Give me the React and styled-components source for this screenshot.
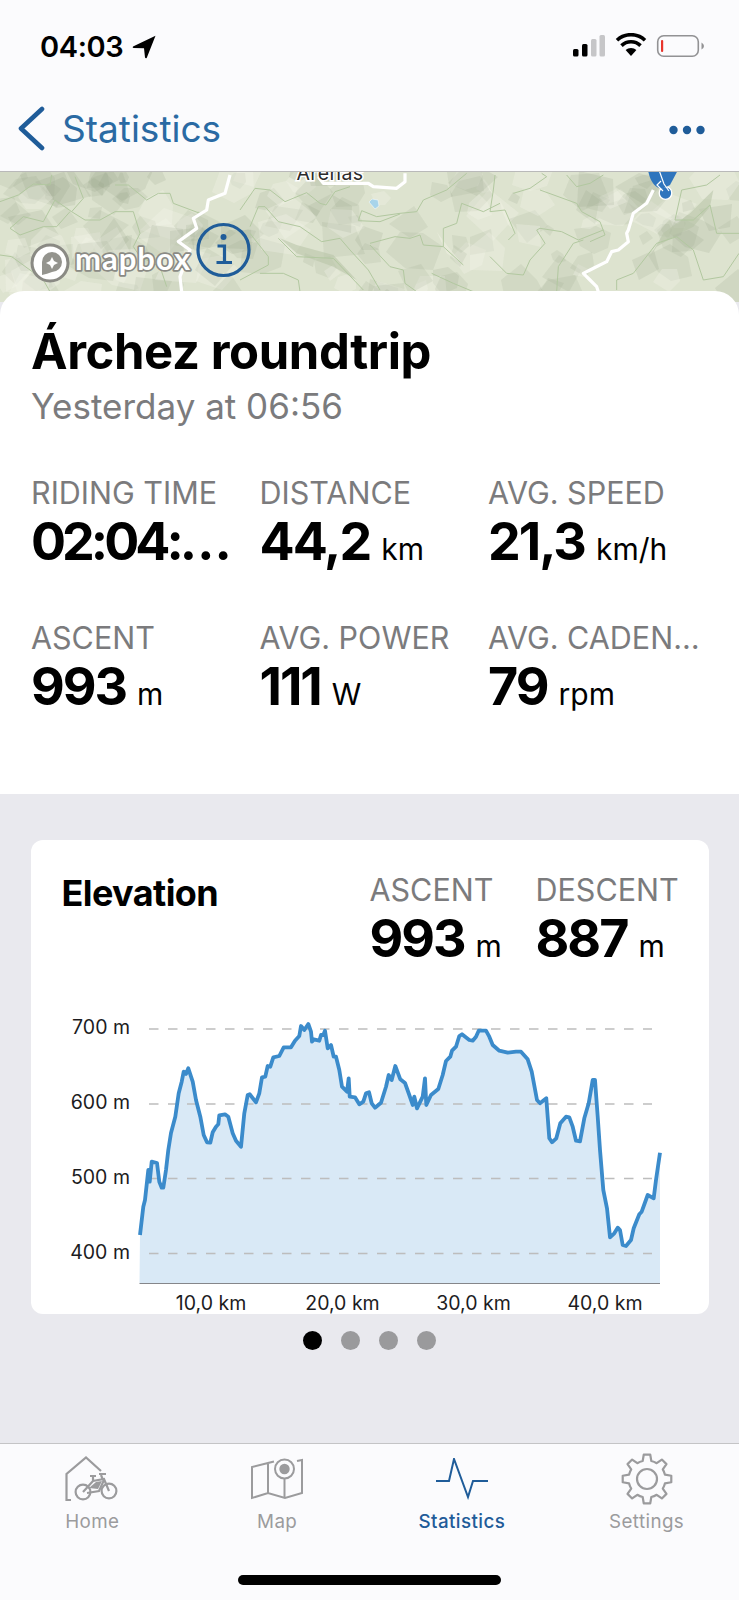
import styled, { createGlobalStyle } from 'styled-components';

const GlobalStyle = createGlobalStyle`
  html, body {
    margin: 0;
    padding: 0;
    background: #fff;
  }
  * {
    box-sizing: border-box;
  }
`;

const BLUE = '#1f5c99';
const GREY_ICON = '#9b9b9d';

const Page = styled.div`
  width: 739px;
  height: 1600px;
  display: flex;
  flex-direction: column;
  overflow: hidden;
  font-family: Inter, 'Liberation Sans', sans-serif;
  background: #e9e9ee;
`;

const TopBars = styled.header`
  height: 172px;
  background: #fbfbfd;
  border-bottom: 1px solid #b9b9b9;
  position: relative;
  z-index: 2;
`;

const StatusBar = styled.div`
  height: 94px;
  padding: 33px 35px 0 40px;
  display: flex;
  justify-content: space-between;
  align-items: flex-start;
`;

const Clock = styled.div`
  display: flex;
  align-items: center;
  gap: 9px;
  font-size: 29px;
  line-height: 28px;
  font-weight: 600;
  letter-spacing: -0.4px;
  color: #000;
`;

const StatusIcons = styled.div`
  display: flex;
  align-items: center;
`;

const NavBar = styled.nav`
  height: 68px;
  padding: 0 34px 0 18px;
  display: flex;
  align-items: center;
  justify-content: space-between;
`;

const BackLink = styled.div`
  display: flex;
  align-items: center;
  gap: 17px;
  font-size: 37px;
  color: #2a6aa3;
`;

const MoreButton = styled.div`
  display: flex;
  margin-top: 4px;
`;

const MapPane = styled.div`
  height: 130px;
  flex: none;
  background: #dfe5d2;
  overflow: hidden;
  svg {
    display: block;
  }
`;

const Sheet = styled.section`
  height: 503px;
  flex: none;
  margin-top: -11px;
  position: relative;
  padding: 33px 31px 0;
  background: #fff;
  border-radius: 24px 24px 0 0;
`;

const Title = styled.h1`
  margin: 0;
  font-size: 49px;
  line-height: 56px;
  font-weight: 700;
  color: #000;
  letter-spacing: -0.4px;
`;

const Subtitle = styled.div`
  margin-top: 4px;
  font-size: 35px;
  line-height: 44px;
  color: #7b7b7d;
`;

const StatGrid = styled.div`
  margin-top: 47px;
  display: grid;
  grid-template-columns: repeat(3, 228.5px);
  row-gap: 41px;
`;

const StatLabel = styled.div`
  font-size: 30.5px;
  line-height: 36px;
  color: #7b7b7d;
  white-space: nowrap;
`;

const StatValue = styled.div`
  margin-top: 1px;
  font-size: 52px;
  line-height: 60px;
  font-weight: 700;
  letter-spacing: ${(props) => (props.$tight ? '-4px' : '-2px')};
  color: #000;
  white-space: nowrap;
`;

const Unit = styled.span`
  margin-left: 11px;
  font-size: 30px;
  font-weight: 400;
  letter-spacing: 0;
`;

const Content = styled.main`
  flex: 1;
  padding: 46px 30px 0;
  display: flex;
  flex-direction: column;
  align-items: center;
`;

const ChartCard = styled.article`
  width: 678px;
  height: 474px;
  flex: none;
  background: #fff;
  border-radius: 12px;
  display: flex;
  flex-direction: column;
  svg {
    display: block;
  }
`;

const ChartHeader = styled.div`
  height: 150px;
  flex: none;
  padding: 32px 20px 0 31px;
  display: flex;
  justify-content: space-between;
`;

const ChartTitle = styled.h2`
  margin: 0;
  font-size: 36px;
  line-height: 42px;
  font-weight: 700;
  color: #000;
  letter-spacing: -0.6px;
`;

const HeaderStats = styled.div`
  display: grid;
  grid-template-columns: 166px 153px;
`;

const Dots = styled.div`
  margin-top: 17px;
  display: flex;
  gap: 18.8px;
`;

const Dot = styled.span`
  width: 19px;
  height: 19px;
  border-radius: 50%;
  background: ${(props) => (props.$active ? '#000' : '#9a9a9c')};
`;

const TabBar = styled.footer`
  height: 157px;
  flex: none;
  padding-top: 10px;
  background: #fbfbfd;
  border-top: 1px solid #c4c4c6;
  position: relative;
  display: grid;
  grid-template-columns: repeat(4, 1fr);
  align-items: start;
`;

const Tab = styled.div`
  display: flex;
  flex-direction: column;
  align-items: center;
  color: ${(props) => (props.$active ? BLUE : GREY_ICON)};
  font-size: 18.8px;
  line-height: 24px;
  font-weight: ${(props) => (props.$active ? 500 : 400)};
  letter-spacing: 0.4px;
`;

const TabIcon = styled.div`
  height: 50px;
  margin-bottom: 6px;
  display: flex;
  align-items: center;
  justify-content: center;
`;

const HomeIndicator = styled.div`
  position: absolute;
  left: 238px;
  top: 131px;
  width: 263px;
  height: 10px;
  border-radius: 5px;
  background: #000;
`;

// elevation profile, traced off the screenshot in page coordinates
const ELEVATION = [
  [139, 1235], [142.3, 1206.7], [144, 1200], [147.3, 1170], [148.7, 1181.7], [150.7, 1161.7], [156, 1163],
  [158.3, 1181.7], [160.7, 1187.7], [162.3, 1187.7], [165, 1170], [167.3, 1150], [170, 1133], [174.3, 1116.7],
  [177.7, 1093.3], [180.7, 1081.7], [182.7, 1071.7], [185, 1074], [187.3, 1068.3], [191.7, 1081.7], [195, 1100],
  [199.3, 1116.7], [202.7, 1135], [206, 1142.3], [209.3, 1142.7], [211.7, 1132.3], [215, 1126.7], [217.3, 1124.3],
  [218.3, 1115.3], [224, 1114.3], [227.3, 1116.7], [231.7, 1133.3], [235, 1140.7], [240, 1146.7], [243.3, 1113.3],
  [246.7, 1095], [248.7, 1094.3], [255, 1102.3], [258.3, 1093.3], [261, 1077.3], [264.3, 1076.7], [266.7, 1066],
  [269.3, 1066.7], [272.3, 1057.3], [278.3, 1056], [282.7, 1047.3], [290, 1047.3], [294, 1040.7], [298.3, 1036],
  [300, 1026], [303.3, 1030], [307.3, 1024], [310, 1031.7], [311, 1041.7], [312.7, 1039.3], [318.3, 1040.7],
  [320, 1035], [322.3, 1035], [324, 1030.7], [326.7, 1048.3], [330, 1045], [332.7, 1056.7], [335, 1056.7],
  [338.3, 1070], [341, 1086.7], [346, 1091.7], [347.7, 1078.3], [348.7, 1096.7], [354, 1097.3], [358.3, 1104.3],
  [362.3, 1101.7], [365, 1093.3], [368, 1092.3], [370.7, 1103.3], [374, 1107.7], [380, 1102.7], [385, 1086.7],
  [387.7, 1075], [390.7, 1080], [394.3, 1066], [399.3, 1079.3], [404, 1083], [408.3, 1095], [411.7, 1105],
  [413.3, 1096.7], [416, 1108.3], [421.7, 1096.7], [424, 1078.3], [425.3, 1105], [430, 1095], [437.3, 1089],
  [441.7, 1075], [445, 1061], [449.3, 1056.7], [451, 1050.7], [455, 1046.7], [458.3, 1036], [461, 1034.3],
  [468.3, 1040], [471.7, 1040.7], [475, 1036.7], [477.7, 1030.7], [485, 1030.7], [488.3, 1036.7], [491.7, 1045],
  [498.3, 1050.7], [506.7, 1052.7], [515, 1051.7], [520, 1051.7], [526.7, 1059.3], [530.7, 1071.7], [536, 1100],
  [539, 1103.3], [545.3, 1098.3], [548.3, 1138.3], [551, 1142.3], [555.3, 1138.3], [559.3, 1123.3], [565, 1116.7],
  [568.3, 1117.3], [571.7, 1126.7], [575, 1140.7], [579, 1141.3], [583.3, 1118.3], [587.7, 1103.3], [591.7, 1080],
  [594, 1080], [596.7, 1116.7], [599, 1150], [602.3, 1190], [606, 1208.3], [609, 1237.3], [613.3, 1233.3],
  [616.7, 1227.7], [619, 1230], [621.7, 1245], [625, 1246], [630, 1240], [632.7, 1228.3], [638.3, 1214.3],
  [640.7, 1211.7], [646.7, 1195], [652.7, 1198.3], [655, 1180], [659, 1152.7],
];

const GRID = [
  { label: '700 m', y: 1029 },
  { label: '600 m', y: 1104 },
  { label: '500 m', y: 1178.5 },
  { label: '400 m', y: 1253.5 },
];

const X_TICKS = [
  { label: '10,0 km', x: 210 },
  { label: '20,0 km', x: 341.5 },
  { label: '30,0 km', x: 472.5 },
  { label: '40,0 km', x: 604 },
];

function ElevationChart() {
  const line = ELEVATION.map((p) => p.join(',')).join(' ');
  return (
    <svg width="678" height="324" viewBox="30 990 678 324" fontFamily="Inter, 'Liberation Sans', sans-serif">
      <polygon points={`138.5,1283 ${line} 659,1283`} fill="#d9e9f6" />
      {GRID.map((g) => (
        <g key={g.label}>
          <line x1="148" x2="651" y1={g.y} y2={g.y} stroke="#bdbdbd" strokeWidth="1.3" strokeDasharray="9.5 9.5" />
          <text x="129" y={g.y + 5} textAnchor="end" fontSize="19.5" fill="#1c1c1e">
            {g.label}
          </text>
        </g>
      ))}
      <polyline points={line} fill="none" stroke="#3b8bcb" strokeWidth="3.8" strokeLinejoin="round" />
      <line x1="138.5" x2="659" y1="1283.5" y2="1283.5" stroke="#85868a" strokeWidth="1.2" />
      {X_TICKS.map((t) => (
        <text key={t.label} x={t.x} y="1310" textAnchor="middle" fontSize="19.5" fill="#1c1c1e">
          {t.label}
        </text>
      ))}
    </svg>
  );
}

const pts = (list) => list.map((p) => p.join(',')).join(' ');
const zoomed = (x0, list) => list.map(([x, y]) => [x0 + x / 3, y / 3]);

const CONTOURS = [
  ...[
    [[0, 95], [55, 75], [100, 42], [150, 45], [155, 15]],
    [[30, 175], [70, 140], [130, 155], [165, 90], [215, 125], [250, 85], [225, 20]],
    [[30, 175], [60, 195], [130, 170], [170, 170], [210, 125]],
    [[215, 125], [255, 150], [300, 150], [345, 125], [400, 125], [420, 190], [400, 230], [420, 260]],
    [[345, 45], [385, 45], [440, 90], [475, 70], [510, 70], [520, 100], [600, 130]],
    [[0, 255], [35, 260], [90, 300], [130, 330], [150, 365]],
    [[420, 260], [480, 290], [500, 350]],
  ].map((c) => zoomed(0, c)),
  ...[
    [[0, 120], [45, 55], [90, 60], [135, 95], [200, 68], [240, 100], [258, 105], [285, 65], [330, 50]],
    [[30, 170], [55, 110], [75, 110], [115, 155], [180, 170], [245, 215], [300, 205], [330, 240], [385, 300], [420, 360]],
    [[30, 190], [85, 260], [85, 285], [0, 330]],
    [[115, 205], [170, 260], [280, 265], [370, 360]],
    [[60, 310], [130, 310], [175, 330], [180, 365]],
    [[355, 152], [365, 122], [410, 140], [480, 130], [530, 125], [550, 90], [620, 60], [680, 10]],
    [[355, 152], [420, 155], [480, 132]],
    [[390, 220], [465, 200], [510, 205], [540, 195], [550, 225], [610, 230], [610, 175], [650, 160], [665, 100], [730, 125], [780, 100]],
    [[390, 225], [450, 290], [490, 300], [495, 340], [530, 365]],
    [[575, 310], [640, 340], [700, 365]],
    [[610, 230], [670, 285]],
  ].map((c) => zoomed(240, c)),
  ...[
    [[15, 15], [10, 60], [0, 125], [45, 120], [75, 190], [55, 210]],
    [[70, 70], [120, 55], [170, 20], [155, 10]],
    [[150, 60], [260, 100], [275, 125], [330, 155], [345, 195], [300, 215]],
    [[140, 180], [150, 175], [215, 185], [265, 210], [340, 180]],
    [[140, 180], [165, 220], [120, 270], [100, 315], [50, 310], [0, 260]],
    [[230, 15], [260, 50], [300, 40], [340, 15]],
    [[200, 365], [205, 290], [250, 220], [280, 210]],
    [[380, 360], [380, 330], [430, 310], [500, 220], [560, 200], [610, 240], [640, 330], [700, 320], [747, 250]],
    [[555, 150], [610, 150], [660, 105], [680, 190], [747, 190]],
    [[555, 150], [575, 60], [650, 45], [690, 15]],
  ].map((c) => zoomed(490, c)),
];

const ROADS = [
  zoomed(0, [[690, 15], [675, 70], [625, 90], [620, 120], [580, 145], [590, 175], [535, 215], [570, 240], [540, 320], [545, 365]]),
  zoomed(240, [[235, 20], [250, 40], [385, 40], [400, 50], [470, 55], [495, 35], [495, 10]]),
  zoomed(490, [[490, 60], [470, 100], [430, 130], [415, 180], [410, 190], [415, 215], [385, 240], [365, 245], [350, 275], [300, 300], [280, 310], [300, 330], [320, 350], [325, 365]]),
];

const RIDGES = [
  zoomed(490, [[480, 260], [520, 190], [600, 130], [670, 60], [660, 110], [610, 170], [560, 195], [500, 230]]),
  zoomed(490, [[30, 90], [50, 130], [70, 180], [55, 165], [35, 120]]),
  zoomed(240, [[120, 205], [170, 225], [280, 255], [350, 330], [280, 290], [170, 250]]),
  zoomed(240, [[590, 185], [620, 225], [665, 280], [620, 250]]),
];

// hillshade facets, seeded so the picture stays the same on every load
function makeFacets() {
  let seed = 1337;
  const rand = () => {
    seed = (seed * 16807) % 2147483647;
    return seed / 2147483647;
  };
  const facets = [];
  for (let i = 0; i < 170; i++) {
    const cx = rand() * 739;
    const cy = rand() * 130;
    const r = 8 + rand() * 24;
    const n = 4 + Math.floor(rand() * 3);
    const start = rand() * 6.28;
    const list = [];
    for (let k = 0; k < n; k++) {
      const a = start + (k / n) * 6.28;
      const rr = r * (0.6 + rand() * 0.5);
      list.push([Math.round(cx + Math.cos(a) * rr), Math.round(cy + Math.sin(a) * rr * 0.85)]);
    }
    const tone = rand();
    let fill = 'rgba(150,163,134,0.15)';
    if (tone > 0.66) fill = 'rgba(244,246,234,0.3)';
    else if (tone > 0.5) fill = 'rgba(136,148,122,0.15)';
    facets.push({ points: pts(list), fill });
  }
  return facets;
}

const FACETS = makeFacets();

function TerrainMap() {
  return (
    <svg width="739" height="130" viewBox="0 2 739 130">
      <rect y="2" width="739" height="130" fill="#dde3cf" />
      {FACETS.map((f, i) => (
        <polygon key={i} points={f.points} fill={f.fill} />
      ))}
      {RIDGES.map((r, i) => (
        <polygon key={i} points={pts(r)} fill={i % 2 ? '#eef0e2' : '#b7c2a6'} opacity="0.55" />
      ))}
      {CONTOURS.map((c, i) => (
        <polyline key={i} points={pts(c)} fill="none" stroke="#b2c8a0" strokeWidth="1" />
      ))}
      {ROADS.map((r, i) => (
        <polyline key={i} points={pts(r)} fill="none" stroke="#fff" strokeWidth="3.2" strokeLinejoin="round" />
      ))}
      <polygon points="372,29 378,30 379,36 375,39 369,32" fill="#a8d4ea" stroke="#fff" strokeWidth="0.5" />
      <text x="330" y="9.5" textAnchor="middle" fontFamily="Inter, sans-serif" fontSize="19.5" fill="#2a2a2a" stroke="#fff"
        strokeWidth="3" paintOrder="stroke" letterSpacing="0.4">
        Arenas
      </text>
      {/* route marker */}
      <circle cx="665.5" cy="23" r="6.3" fill="#2f75bd" stroke="#fff" strokeWidth="1.3" />
      <path d="M648 0 H678 L670 15 L662 19 Q651 17 648 0Z" fill="#2f75bd" />
      <path d="M659 0 L664 14 L669 21 M661 11 L657 15 L663 21" fill="none" stroke="#fff" strokeWidth="1.2" />
      {/* mapbox logo */}
      <circle cx="50" cy="93" r="18" fill="#fff" stroke="#8a8a84" strokeWidth="3" />
      <path d="M42 105 V92 A10 10 0 1 1 52 102 Q47 104 42 105Z" fill="#94948e" />
      <path d="M52 87 L54 91 L58 93 L54 95 L52 99 L50 95 L46 93 L50 91Z" fill="#fff" />
      <text x="75" y="100" fontFamily="Lato, 'Open Sans', sans-serif" fontWeight="700" fontSize="31" letterSpacing="1" fill="#fff"
        stroke="#8a8a84" strokeWidth="3.4" paintOrder="stroke" strokeLinejoin="round">
        mapbox
      </text>
      {/* info button */}
      <circle cx="223.5" cy="80" r="25.5" fill="none" stroke={BLUE} strokeWidth="3.2" />
      <circle cx="223.5" cy="67" r="3" fill={BLUE} />
      <path d="M217.5 76 H224.5 V92 M216.5 92.5 H232" fill="none" stroke={BLUE} strokeWidth="3.2" />
    </svg>
  );
}

function LocationArrow() {
  return (
    <svg width="24" height="24" viewBox="0 0 24 24">
      <path d="M23.5 0.8 L1 11.6 Q0 12.8 1.6 13 L12 13.2 L13 22.6 Q13.8 24 14.8 22.8Z" fill="#000" />
    </svg>
  );
}

function SignalIcons() {
  return (
    <svg width="134" height="26" viewBox="570 34 134 26">
      <rect x="573" y="50" width="5.5" height="7.5" rx="1.5" fill="#000" />
      <rect x="582" y="45" width="5.5" height="12.5" rx="1.5" fill="#000" />
      <rect x="591" y="40" width="5.5" height="17.5" rx="1.5" fill="#c6c6c8" />
      <rect x="599.5" y="36" width="5.5" height="21.5" rx="1.5" fill="#c6c6c8" />
      <path d="M631 57 L625.6 51 A8 8 0 0 1 636.4 51Z" fill="#000" />
      <path d="M621.5 46.6 A13.6 13.6 0 0 1 640.5 46.6" fill="none" stroke="#000" strokeWidth="3.6" />
      <path d="M617 41.2 A20.5 20.5 0 0 1 645 41.2" fill="none" stroke="#000" strokeWidth="3.6" />
      <rect x="657.7" y="36.7" width="40.6" height="20.6" rx="6" fill="none" stroke="#929294" strokeWidth="1.6" />
      <rect x="661" y="41" width="2.2" height="12" rx="1" fill="#e8352c" />
      <path d="M701.5 43.5 Q704 45 704 47 Q704 49 701.5 50.5Z" fill="#929294" />
    </svg>
  );
}

function BackChevron() {
  return (
    <svg width="27" height="45" viewBox="0 0 27 45">
      <path d="M24 3 L3 22.5 L24 42" fill="none" stroke={BLUE} strokeWidth="4.6" strokeLinecap="round" strokeLinejoin="round" />
    </svg>
  );
}

function MoreDots() {
  return (
    <svg width="36" height="10" viewBox="0 0 36 10">
      <circle cx="4.5" cy="5" r="4.2" fill={BLUE} />
      <circle cx="18" cy="5" r="4.2" fill={BLUE} />
      <circle cx="31.5" cy="5" r="4.2" fill={BLUE} />
    </svg>
  );
}

function HomeIcon() {
  return (
    <svg width="54" height="46" viewBox="0 0 54 46" fill="none" stroke={GREY_ICON} strokeWidth="2.2">
      <path d="M6 44 H1.5 V18 L21 1.5 L36 15" />
      <circle cx="18" cy="36" r="7.4" />
      <circle cx="44" cy="35" r="7.4" />
      <path d="M18 36 L28 25 L39 23 L44 35 M22 37 L34 35 L39 24 M25 20 H31 M28 21 V25 M36 19 L38 24 M34 18 H41" />
      <path d="M24 32 L31 26 L37 25 L33 33Z" fill={GREY_ICON} stroke="none" />
    </svg>
  );
}

function MapIcon() {
  return (
    <svg width="52" height="42" viewBox="0 0 52 42" fill="none" stroke={GREY_ICON} strokeWidth="2">
      <path d="M17 5 L1 9 V40 L17 35 L34 40 L51 35 V2 L46 3 M17 5 V35 M17 5 L23 3.5" />
      <circle cx="33.5" cy="11" r="9.5" />
      <circle cx="33.5" cy="11" r="5.2" fill={GREY_ICON} stroke="none" />
      <path d="M33.5 21 V39" />
    </svg>
  );
}

function StatsIcon() {
  return (
    <svg width="52" height="42" viewBox="0 0 52 42" fill="none" stroke={BLUE} strokeWidth="2">
      <path d="M0 23 H13 L18 1 L32 39 L37 23 H52" />
    </svg>
  );
}

function gearPath(cx, cy, outer, inner, teeth) {
  const step = (Math.PI * 2) / teeth;
  const at = (r, a) => `${(cx + r * Math.cos(a)).toFixed(2)} ${(cy + r * Math.sin(a)).toFixed(2)}`;
  let d = '';
  for (let i = 0; i < teeth; i++) {
    const a = i * step - Math.PI / 2;
    d += `${i === 0 ? 'M' : 'L'}${at(inner, a - step * 0.3)} L${at(outer, a - step * 0.17)} L${at(outer, a + step * 0.17)} L${at(inner, a + step * 0.3)} `;
    d += `A${inner} ${inner} 0 0 1 ${at(inner, a + step * 0.7)} `;
  }
  return `${d}Z`;
}

function GearIcon() {
  return (
    <svg width="52" height="52" viewBox="0 0 52 52" fill="none" stroke={GREY_ICON} strokeWidth="2.2" strokeLinejoin="round">
      <path d={gearPath(26, 26, 24.5, 18.5, 8)} />
      <circle cx="26" cy="26" r="10" />
    </svg>
  );
}

function Stat({ label, value, unit, tight }) {
  return (
    <div>
      <StatLabel>{label}</StatLabel>
      <StatValue $tight={tight}>
        {value}
        {unit && <Unit>{unit}</Unit>}
      </StatValue>
    </div>
  );
}

const STATS = [
  { label: 'RIDING TIME', value: '02:04:…', tight: true },
  { label: 'DISTANCE', value: '44,2', unit: 'km' },
  { label: 'AVG. SPEED', value: '21,3', unit: 'km/h' },
  { label: 'ASCENT', value: '993', unit: 'm' },
  { label: 'AVG. POWER', value: '111', unit: 'W' },
  { label: 'AVG. CADEN…', value: '79', unit: 'rpm' },
];

const TABS = [
  { label: 'Home', icon: <HomeIcon /> },
  { label: 'Map', icon: <MapIcon /> },
  { label: 'Statistics', icon: <StatsIcon />, active: true },
  { label: 'Settings', icon: <GearIcon /> },
];

export default function App() {
  return (
    <Page>
      <GlobalStyle />
      <TopBars>
        <StatusBar>
          <Clock>
            04:03
            <LocationArrow />
          </Clock>
          <StatusIcons>
            <SignalIcons />
          </StatusIcons>
        </StatusBar>
        <NavBar>
          <BackLink>
            <BackChevron />
            Statistics
          </BackLink>
          <MoreButton>
            <MoreDots />
          </MoreButton>
        </NavBar>
      </TopBars>
      <MapPane>
        <TerrainMap />
      </MapPane>
      <Sheet>
        <Title>Árchez roundtrip</Title>
        <Subtitle>Yesterday at 06:56</Subtitle>
        <StatGrid>
          {STATS.map((s) => (
            <Stat key={s.label} {...s} />
          ))}
        </StatGrid>
      </Sheet>
      <Content>
        <ChartCard>
          <ChartHeader>
            <ChartTitle>Elevation</ChartTitle>
            <HeaderStats>
              <Stat label="ASCENT" value="993" unit="m" />
              <Stat label="DESCENT" value="887" unit="m" />
            </HeaderStats>
          </ChartHeader>
          <ElevationChart />
        </ChartCard>
        <Dots>
          <Dot $active />
          <Dot />
          <Dot />
          <Dot />
        </Dots>
      </Content>
      <TabBar>
        {TABS.map((t) => (
          <Tab key={t.label} $active={t.active}>
            <TabIcon>{t.icon}</TabIcon>
            {t.label}
          </Tab>
        ))}
        <HomeIndicator />
      </TabBar>
    </Page>
  );
}
